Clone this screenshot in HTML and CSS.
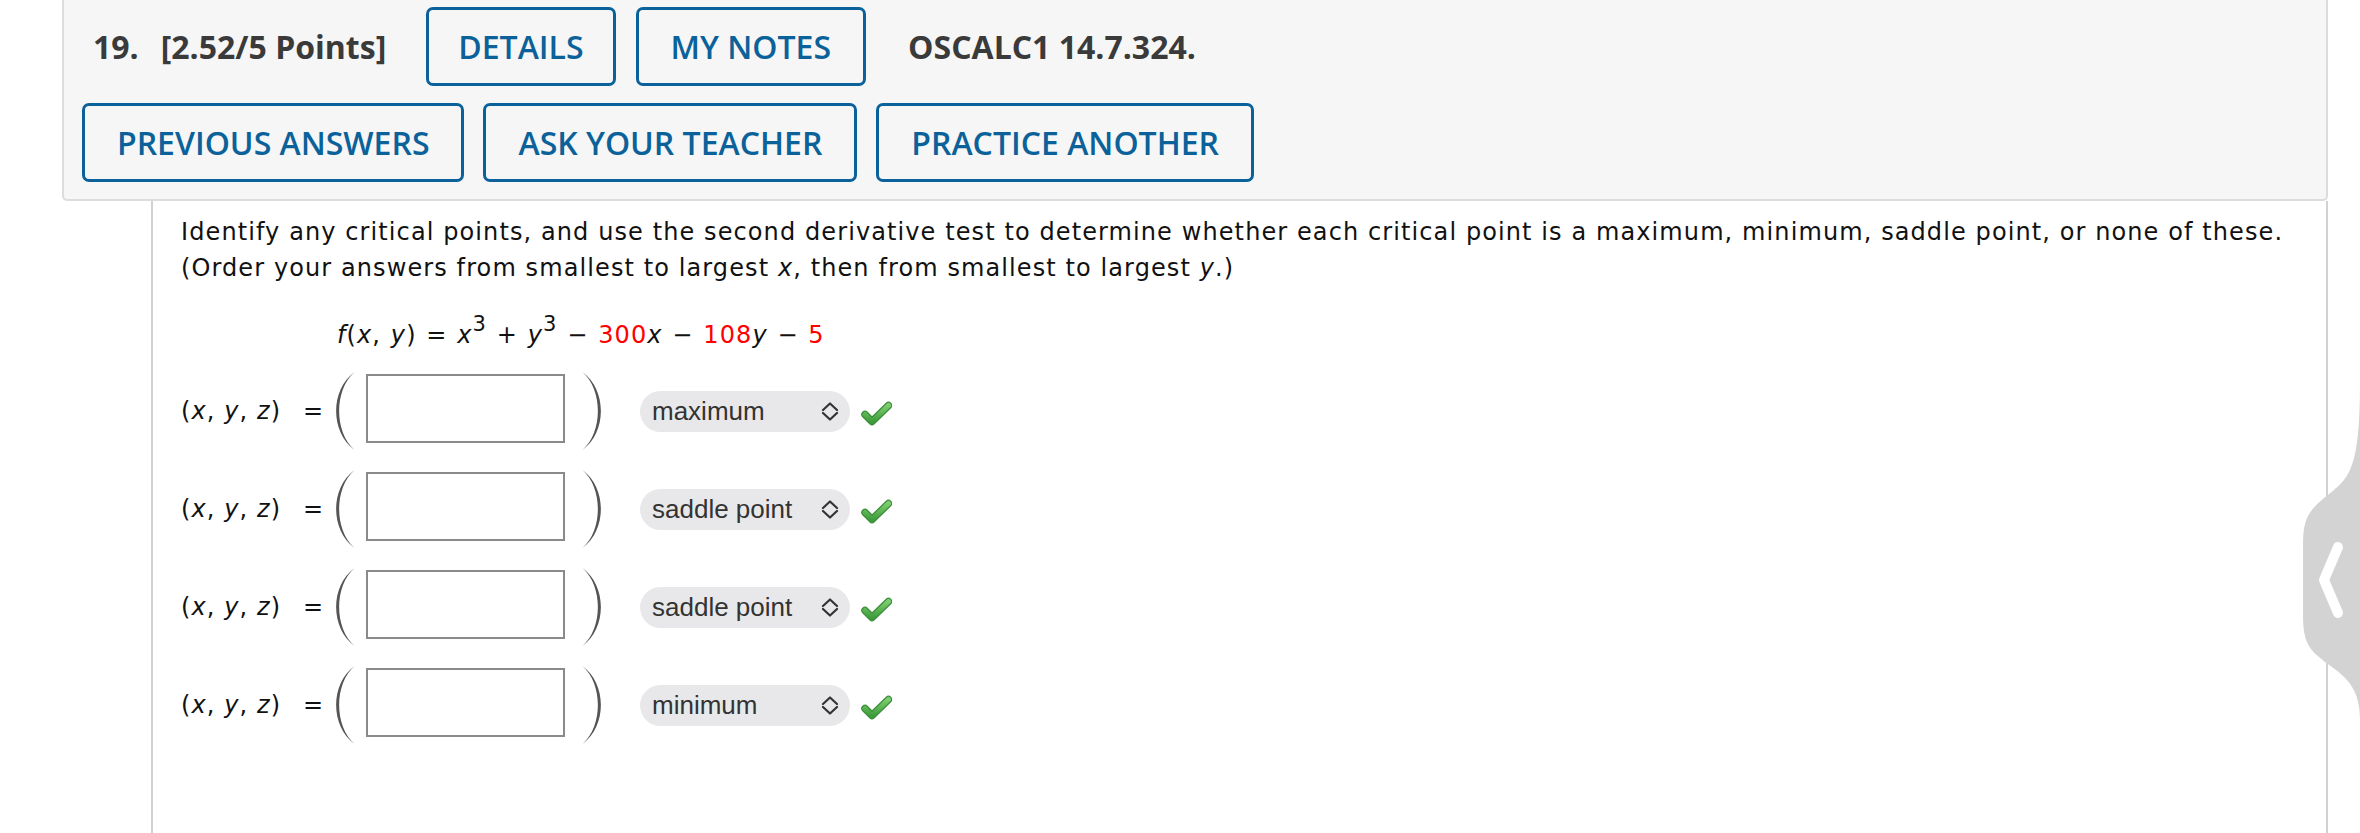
FILE: index.html
```html
<!DOCTYPE html>
<html lang="en">
<head>
<meta charset="utf-8">
<title>Question 19</title>
<link rel="stylesheet" href="styles.css">
</head>
<body>
<div class="page">
  <div class="qhead">
    <div class="hrow hrow-top">
      <span class="qnum">19.</span>
      <span class="qpts">[2.52/5 Points]</span>
      <span class="btn btn-details">DETAILS</span>
      <span class="btn btn-notes">MY NOTES</span>
      <span class="qref">OSCALC1 14.7.324.</span>
    </div>
    <div class="hrow">
      <span class="btn">PREVIOUS ANSWERS</span>
      <span class="btn">ASK YOUR TEACHER</span>
      <span class="btn">PRACTICE ANOTHER</span>
    </div>
  </div>
  <div class="qbody">
    <p class="prompt">Identify any critical points, and use the second derivative test to determine whether each critical point is a maximum, minimum, saddle point, or none of these.<br>(Order your answers from smallest to largest <i>x</i>, then from smallest to largest <i>y</i>.)</p>
    <p class="formula"><i>f</i>(<i>x</i>, <i>y</i>) = <i>x</i><sup>3</sup> + <i>y</i><sup>3</sup> &minus; <span class="red">300</span><i>x</i> &minus; <span class="red">108</span><i>y</i> &minus; <span class="red">5</span></p>
    <div class="answers">
      <div class="arow">
        <span class="lbl">(<i>x</i>, <i>y</i>, <i>z</i>)</span>
        <span class="eqs">=</span>
        <svg class="paren" width="19" height="78" viewBox="0 0 19 78"><path d="M18.5 0 C-6 18 -6 60 18.5 78 C-2 60 -2 18 18.5 0 Z" fill="#555"/></svg>
        <span class="inp"></span>
        <svg class="paren paren-r" width="19" height="78" viewBox="0 0 19 78"><path d="M0.5 0 C25 18 25 60 0.5 78 C21 60 21 18 0.5 0 Z" fill="#555"/></svg>
        <span class="sel"><span class="seltext">maximum</span><svg class="chev" width="18" height="19" viewBox="0 0 18 19"><path d="M2 8 L9 1.5 L16 8 M2 11 L9 17.5 L16 11" fill="none" stroke="#333" stroke-width="2.2" stroke-linecap="round" stroke-linejoin="round"/></svg></span>
        <svg class="check" width="31" height="25" viewBox="0 0 31 25"><defs><linearGradient id="g1" x1="0" y1="0" x2="0" y2="1"><stop offset="0" stop-color="#7ccd6f"/><stop offset="1" stop-color="#3f9c3c"/></linearGradient></defs><path d="M4 13.5 L11 20.5 L27.5 4.5" fill="none" stroke="#3b8f39" stroke-width="7.5" stroke-linecap="round" stroke-linejoin="round"/><path d="M4 13.5 L11 20.5 L27.5 4.5" fill="none" stroke="url(#g1)" stroke-width="5" stroke-linecap="round" stroke-linejoin="round"/></svg>
      </div>
      <div class="arow">
        <span class="lbl">(<i>x</i>, <i>y</i>, <i>z</i>)</span>
        <span class="eqs">=</span>
        <svg class="paren" width="19" height="78" viewBox="0 0 19 78"><path d="M18.5 0 C-6 18 -6 60 18.5 78 C-2 60 -2 18 18.5 0 Z" fill="#555"/></svg>
        <span class="inp"></span>
        <svg class="paren paren-r" width="19" height="78" viewBox="0 0 19 78"><path d="M0.5 0 C25 18 25 60 0.5 78 C21 60 21 18 0.5 0 Z" fill="#555"/></svg>
        <span class="sel"><span class="seltext">saddle point</span><svg class="chev" width="18" height="19" viewBox="0 0 18 19"><path d="M2 8 L9 1.5 L16 8 M2 11 L9 17.5 L16 11" fill="none" stroke="#333" stroke-width="2.2" stroke-linecap="round" stroke-linejoin="round"/></svg></span>
        <svg class="check" width="31" height="25" viewBox="0 0 31 25"><defs><linearGradient id="g2" x1="0" y1="0" x2="0" y2="1"><stop offset="0" stop-color="#7ccd6f"/><stop offset="1" stop-color="#3f9c3c"/></linearGradient></defs><path d="M4 13.5 L11 20.5 L27.5 4.5" fill="none" stroke="#3b8f39" stroke-width="7.5" stroke-linecap="round" stroke-linejoin="round"/><path d="M4 13.5 L11 20.5 L27.5 4.5" fill="none" stroke="url(#g2)" stroke-width="5" stroke-linecap="round" stroke-linejoin="round"/></svg>
      </div>
      <div class="arow">
        <span class="lbl">(<i>x</i>, <i>y</i>, <i>z</i>)</span>
        <span class="eqs">=</span>
        <svg class="paren" width="19" height="78" viewBox="0 0 19 78"><path d="M18.5 0 C-6 18 -6 60 18.5 78 C-2 60 -2 18 18.5 0 Z" fill="#555"/></svg>
        <span class="inp"></span>
        <svg class="paren paren-r" width="19" height="78" viewBox="0 0 19 78"><path d="M0.5 0 C25 18 25 60 0.5 78 C21 60 21 18 0.5 0 Z" fill="#555"/></svg>
        <span class="sel"><span class="seltext">saddle point</span><svg class="chev" width="18" height="19" viewBox="0 0 18 19"><path d="M2 8 L9 1.5 L16 8 M2 11 L9 17.5 L16 11" fill="none" stroke="#333" stroke-width="2.2" stroke-linecap="round" stroke-linejoin="round"/></svg></span>
        <svg class="check" width="31" height="25" viewBox="0 0 31 25"><defs><linearGradient id="g3" x1="0" y1="0" x2="0" y2="1"><stop offset="0" stop-color="#7ccd6f"/><stop offset="1" stop-color="#3f9c3c"/></linearGradient></defs><path d="M4 13.5 L11 20.5 L27.5 4.5" fill="none" stroke="#3b8f39" stroke-width="7.5" stroke-linecap="round" stroke-linejoin="round"/><path d="M4 13.5 L11 20.5 L27.5 4.5" fill="none" stroke="url(#g3)" stroke-width="5" stroke-linecap="round" stroke-linejoin="round"/></svg>
      </div>
      <div class="arow">
        <span class="lbl">(<i>x</i>, <i>y</i>, <i>z</i>)</span>
        <span class="eqs">=</span>
        <svg class="paren" width="19" height="78" viewBox="0 0 19 78"><path d="M18.5 0 C-6 18 -6 60 18.5 78 C-2 60 -2 18 18.5 0 Z" fill="#555"/></svg>
        <span class="inp"></span>
        <svg class="paren paren-r" width="19" height="78" viewBox="0 0 19 78"><path d="M0.5 0 C25 18 25 60 0.5 78 C21 60 21 18 0.5 0 Z" fill="#555"/></svg>
        <span class="sel"><span class="seltext">minimum</span><svg class="chev" width="18" height="19" viewBox="0 0 18 19"><path d="M2 8 L9 1.5 L16 8 M2 11 L9 17.5 L16 11" fill="none" stroke="#333" stroke-width="2.2" stroke-linecap="round" stroke-linejoin="round"/></svg></span>
        <svg class="check" width="31" height="25" viewBox="0 0 31 25"><defs><linearGradient id="g4" x1="0" y1="0" x2="0" y2="1"><stop offset="0" stop-color="#7ccd6f"/><stop offset="1" stop-color="#3f9c3c"/></linearGradient></defs><path d="M4 13.5 L11 20.5 L27.5 4.5" fill="none" stroke="#3b8f39" stroke-width="7.5" stroke-linecap="round" stroke-linejoin="round"/><path d="M4 13.5 L11 20.5 L27.5 4.5" fill="none" stroke="url(#g4)" stroke-width="5" stroke-linecap="round" stroke-linejoin="round"/></svg>
      </div>
    </div>
  </div>
  <svg class="sidetab" width="64" height="350" viewBox="0 0 64 350"><path d="M64 5 C64 85 56 100 38 115 C14 134 7 140 7 170 L7 240 C7 270 14 276 36 292 C56 306 64 320 64 345 Z" fill="#d3d3d3"/><path d="M42 172 L28 205 L42 238" fill="none" stroke="#fff" stroke-width="10" stroke-linecap="round" stroke-linejoin="round"/></svg>
</div>
</body>
</html>
```

FILE: styles.css
```css
html, body {
  margin: 0;
  padding: 0;
  background: #fff;
}
body {
  width: 2360px;
  height: 833px;
  overflow: hidden;
}
.page {
  position: relative;
  padding: 0 32px 0 62px;
  height: 833px;
  box-sizing: border-box;
}
.qhead {
  background: #f6f6f6;
  border: 2px solid #dcdcdc;
  border-top: none;
  border-radius: 0 0 5px 5px;
  padding: 7px 0 17px 18px;
  font-family: "Open Sans", "Liberation Sans", sans-serif;
}
.hrow {
  display: flex;
  align-items: center;
  gap: 19px;
}
.hrow + .hrow {
  margin-top: 17px;
}
.hrow-top {
  padding-left: 11px;
  gap: 0;
}
.qnum, .qpts, .qref {
  font-weight: 700;
  font-size: 32px;
  color: #3a3a3a;
}
.qpts {
  margin-left: 22px;
  margin-right: 40px;
}
.btn-notes {
  margin-left: 20px;
}
.qref {
  margin-left: 42px;
}
.btn {
  display: inline-flex;
  align-items: center;
  box-sizing: border-box;
  height: 79px;
  padding: 0 32px;
  border: 3.5px solid #0b6199;
  border-radius: 7px;
  color: #0b6199;
  font-weight: 600;
  font-size: 32px;
}
.btn-details {
  padding: 0 29px;
}
.qbody {
  margin-left: 89px;
  border-left: 2px solid #d2d2d2;
  border-right: 2px solid #d2d2d2;
  padding: 13px 0 0 28px;
  height: 640px;
  font-family: "DejaVu Sans", Verdana, sans-serif;
  font-size: 24px;
  letter-spacing: 1.1px;
  color: #111;
}
.prompt {
  margin: 0;
  line-height: 36px;
}
.formula {
  margin: 32px 0 0 156px;
  line-height: 35px;
  font-size: 24px;
  word-spacing: 1px;
}
.formula sup {
  font-size: 21px;
  vertical-align: 0;
  position: relative;
  top: -12px;
  line-height: 0;
}
.red {
  color: #f00;
}
.answers {
  margin-top: 18px;
  display: flex;
  flex-direction: column;
  gap: 18px;
}
.arow {
  display: flex;
  align-items: center;
  height: 80px;
}
.lbl {
  width: 122px;
  white-space: nowrap;
}
.eqs {
  width: 33px;
}
.paren {
  flex: none;
}
.inp {
  width: 199px;
  height: 69px;
  box-sizing: border-box;
  border: 2px solid #8a8a8a;
  background: #fff;
  margin: 0 17px 6px 11px;
}
.paren-r {
  margin-right: 39px;
}
.sel {
  display: flex;
  align-items: center;
  justify-content: space-between;
  width: 210px;
  height: 41px;
  box-sizing: border-box;
  border-radius: 21px;
  background: #e8e8ea;
  padding: 0 11px 0 12px;
  font-family: "Liberation Sans", Arial, sans-serif;
  font-size: 26px;
  letter-spacing: 0;
  color: #333;
}
.chev {
  flex: none;
}
.check {
  margin-left: 11px;
  margin-top: 4px;
}
.sidetab {
  position: absolute;
  left: 2296px;
  top: 375px;
}
```
